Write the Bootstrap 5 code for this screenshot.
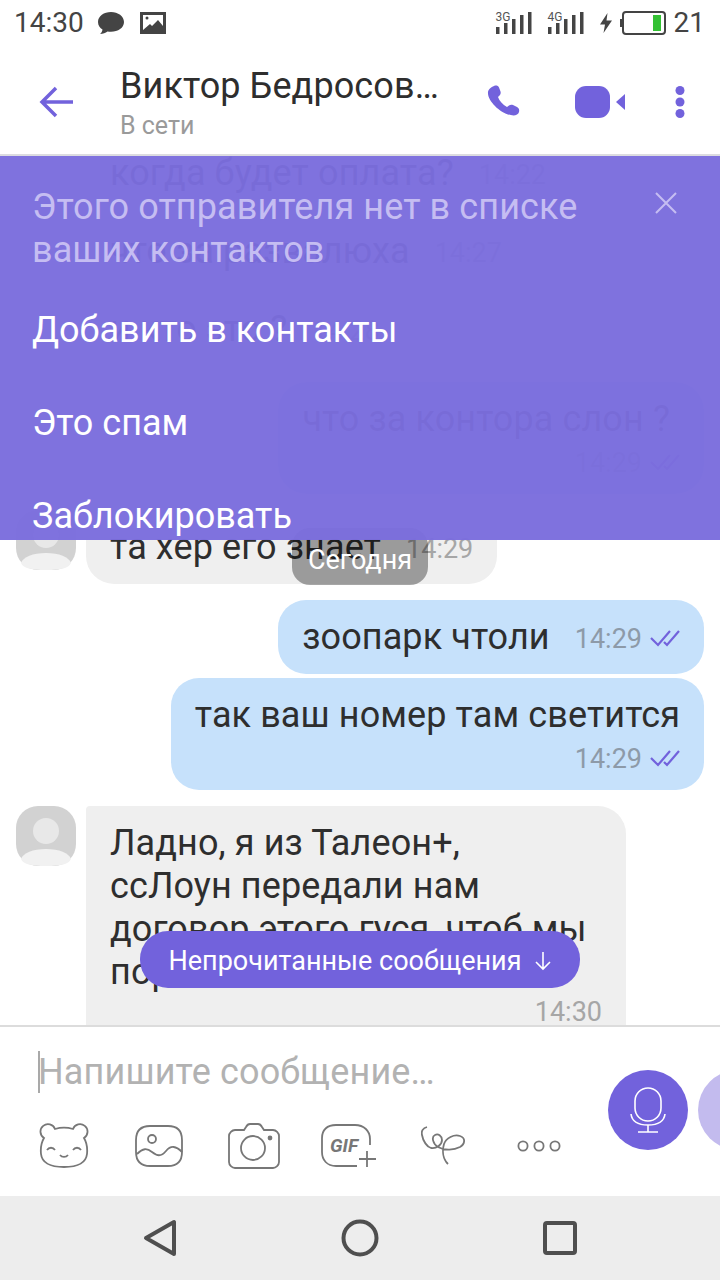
<!DOCTYPE html>
<html lang="ru">
<head>
    <meta charset="UTF-8">
    <meta name="viewport" content="width=device-width, initial-scale=1.0">
    <title>Чат</title>
    <link href="https://cdn.jsdelivr.net/npm/bootstrap@5.3.3/dist/css/bootstrap.min.css" rel="stylesheet">
    <style>
        html, body {
            width: 720px;
            height: 1280px;
            overflow: hidden;
            background: #fff;
        }
        body {
            font-family: Roboto, "Liberation Sans", sans-serif;
            color: #2e2e2e;
        }
        .phone {
            width: 720px;
            height: 1280px;
            overflow: hidden;
        }
        .status-bar {
            height: 50px;
            padding: 0 15px 5px 14px;
            color: #444;
            font-size: 28px;
        }
        .status-icon {
            margin-left: 14px;
        }
        .net-label {
            font-size: 12px;
            line-height: 10px;
            position: absolute;
            left: 0;
            top: 0;
            color: #555;
        }
        .signal {
            position: relative;
            width: 36px;
            height: 22px;
        }
        .toolbar {
            height: 106px;
            border-bottom: 2px solid #dcdce0;
        }
        .back-btn {
            width: 120px;
            padding-left: 39px;
        }
        .chat-title {
            width: 359px;
            padding-top: 3px;
        }
        .chat-name {
            font-size: 36px;
            line-height: 40px;
            letter-spacing: .1px;
            white-space: nowrap;
        }
        .chat-sub {
            font-size: 25px;
            line-height: 30px;
            margin-top: 5px;
            color: #9a9a9a;
        }
        .call-icon {
            margin-left: 8px;
        }
        .video-icon {
            margin-left: 54px;
        }
        .dots-icon {
            margin-left: 50px;
        }
        .chat-area {
            position: relative;
            height: 869px;
            overflow: hidden;
            padding: 0 16px;
        }
        .msg-list {
            margin-top: -20px;
        }
        .msg-row {
            display: flex;
            margin-bottom: 4px;
        }
        .msg-row.side-end {
            justify-content: flex-end;
        }
        .msg-row.gap-after {
            margin-bottom: 16px;
        }
        .avatar-box {
            width: 60px;
            height: 60px;
            flex: none;
            margin-right: 10px;
        }
        .avatar-blank {
            width: 60px;
            flex: none;
            margin-right: 10px;
        }
        .bubble {
            padding: 16px 24px 15px;
            font-size: 36px;
            line-height: 43px;
            letter-spacing: .1px;
            border-radius: 28px;
        }
        .bubble-in {
            background: #efefef;
            border-top-left-radius: 4px;
        }
        .bubble-wide {
            width: 540px;
            flex: none;
            padding-bottom: 48px;
        }
        .bubble-wide .msg-time {
            margin-top: 0;
        }
        .bubble-out {
            background: #c6e1fb;
        }
        .bubble-two {
            padding-bottom: 13px;
        }
        .time-row {
            margin-top: 2px;
        }
        .slon-text {
            margin-right: 10px;
        }
        .msg-time {
            font-size: 27px;
            line-height: 36px;
            letter-spacing: 0;
            color: #8d9aa8;
            margin-left: 25px;
            margin-top: 2px;
            white-space: nowrap;
        }
        .bubble-in .msg-time {
            color: #a6a6a6;
        }
        .notice-panel {
            position: absolute;
            left: 0;
            top: 0;
            right: 0;
            height: 384px;
            background: rgba(123, 109, 221, .97);
            padding: 30px 32px 0;
            overflow: hidden;
            z-index: 3;
        }
        .notice-text {
            font-size: 36px;
            line-height: 43px;
            letter-spacing: .1px;
            color: #c5bdf2;
        }
        .notice-spacer {
            height: 37px;
        }
        .notice-action {
            display: block;
            font-size: 36px;
            line-height: 43px;
            color: #fff;
            margin-bottom: 50px;
        }
        .notice-close {
            position: absolute;
            right: 43px;
            top: 36px;
        }
        .date-chip {
            position: absolute;
            left: 292px;
            top: 372px;
            width: 136px;
            height: 57px;
            padding-top: 17px;
            background: rgba(0, 0, 0, .35);
            border-radius: 18px;
            color: #fff;
            text-align: center;
            font-size: 27px;
            line-height: 30px;
            z-index: 2;
        }
        .unread-pill {
            position: absolute;
            left: 140px;
            top: 775px;
            width: 440px;
            height: 57px;
            padding-top: 3px;
            background: #7262dc;
            border-radius: 28px;
            color: #fff;
            font-size: 27px;
            z-index: 2;
        }
        .unread-arrow {
            margin-left: 12px;
        }
        .composer {
            height: 171px;
            border-top: 2px solid #dcdcdc;
            overflow: hidden;
        }
        .composer-main {
            width: 608px;
            flex: none;
            padding-left: 38px;
        }
        .composer-input {
            height: 42px;
            margin-top: 24px;
            border-left: 2px solid #a9a9a9;
            font-size: 36px;
            line-height: 42px;
            letter-spacing: .15px;
            color: #b2b2b2;
            text-indent: -2px;
            white-space: nowrap;
        }
        .tool-row {
            display: grid;
            grid-template-columns: 97px 93px 93px 100px 96px 44px;
            align-items: center;
            margin-top: 30px;
        }
        .circle-btn {
            width: 80px;
            height: 80px;
            flex: none;
            border-radius: 50%;
            margin-top: 43px;
        }
        .mic-btn {
            background: #7262dc;
        }
        .extra-btn {
            background: #c3bbee;
            margin-left: 10px;
        }
        .nav-bar {
            height: 84px;
            background: #ededed;
            padding: 0 143px 0 143px;
        }
    </style>
</head>
<body>
<div class="phone d-flex flex-column">

    <div class="status-bar d-flex align-items-center justify-content-between">
        <div class="d-flex align-items-center">
            <span>14:30</span>
            <svg class="status-icon" width="26" height="24" viewBox="0 0 26 24"><path d="M13 1C6 1 0 5 0 11c0 3.500 2 6 4.500 7.500-.3 2-1.300 3.500-2.500 4.500 3 0 5.500-1 7.500-2.500 1 .2 2.500.3 3.500.3 7 0 13-4 13-9.800S20 1 13 1z" fill="#444"/></svg>
            <svg class="ms-3" width="26" height="22" viewBox="0 0 26 22"><path d="M0 0h26v22H0z" fill="#444"/><path d="M3 3h20v11l-5-6-6 6-2-2-7 6z" fill="#fff"/><circle cx="7" cy="6" r="1.500" fill="#444"/></svg>
        </div>
        <div class="d-flex align-items-center">
            <div class="signal">
                <span class="net-label">3G</span>
                <svg class="position-absolute top-0 start-0" width="36" height="22" viewBox="0 0 36 22"><path d="M0 15h3.500v7H0zM8 11h3.500v11H8zM16 7h3.500v15H16zM24 3h3.500v19H24zM32 0h3.500v22H32z" fill="#444"/></svg>
            </div>
            <div class="signal ms-3">
                <span class="net-label">4G</span>
                <svg class="position-absolute top-0 start-0" width="36" height="22" viewBox="0 0 36 22"><path d="M0 15h3.500v7H0zM8 11h3.500v11H8zM16 7h3.500v15H16zM24 3h3.500v19H24zM32 0h3.500v22H32z" fill="#444"/></svg>
            </div>
            <svg class="ms-3" width="12" height="20" viewBox="0 0 12 20"><path d="M7.500 0L0 11.500h5L3.500 20 12 7.500H6.500z" fill="#444"/></svg>
            <svg class="ms-2" width="46" height="24" viewBox="0 0 46 24"><rect x="0" y="8" width="3" height="8" fill="#444"/><rect x="3" y="1" width="42" height="22" rx="3" fill="#fff" stroke="#444" stroke-width="2"/><rect x="33" y="4" width="8" height="16" fill="#33c133"/></svg>
            <span class="ms-2">21</span>
        </div>
    </div>

    <div class="toolbar d-flex align-items-center">
        <div class="back-btn">
            <svg width="34" height="32" viewBox="0 0 34 32"><path d="M34 16H3M17 2L3 16l14 14" fill="none" stroke="#7262dc" stroke-width="3.500"/></svg>
        </div>
        <div class="chat-title">
            <div class="chat-name">Виктор Бедросов…</div>
            <div class="chat-sub">В сети</div>
        </div>
        <svg class="call-icon" width="34" height="34" viewBox="0 0 34 34"><path d="M7 1c2-1 4-.500 5 1.500l1.500 4c.5 1.500 0 3-1 4l-1.500 1.500c1.500 4 4.500 7.500 9 10l2-1.500c1-.8 2.500-1 4-.5l4 2c2 1 2.500 3 2 5-.5 2-3 3.500-5.500 3.500C15 30 0 16 1 7c.3-2.500 3-5 6-6z" fill="#7262dc"/></svg>
        <svg class="video-icon" width="50" height="32" viewBox="0 0 50 32"><rect x="0" y="0" width="35" height="32" rx="11" fill="#7262dc"/><path d="M50 8v16l-9-8z" fill="#7262dc"/></svg>
        <svg class="dots-icon" width="10" height="32" viewBox="0 0 10 32"><circle cx="5" cy="4.500" r="4.500" fill="#7262dc"/><circle cx="5" cy="16" r="4.500" fill="#7262dc"/><circle cx="5" cy="27.500" r="4.500" fill="#7262dc"/></svg>
    </div>

    <div class="chat-area">
        <div class="msg-list">
            <div class="msg-row">
                <div class="avatar-blank"></div>
                <div class="bubble bubble-in d-flex align-items-center"><span>когда будет оплата?</span><span class="msg-time">14:22</span></div>
            </div>
            <div class="msg-row">
                <div class="avatar-blank"></div>
                <div class="bubble bubble-in d-flex align-items-center"><span>что за развалюха</span><span class="msg-time">14:27</span></div>
            </div>
            <div class="msg-row gap-after">
                <div class="avatar-blank"></div>
                <div class="bubble bubble-in d-flex align-items-center"><span>и кто это ?</span><span class="msg-time">14:28</span></div>
            </div>
            <div class="msg-row side-end gap-after">
                <div class="bubble bubble-out bubble-two">
                    <div class="slon-text">что за контора слон ?</div>
                    <div class="d-flex justify-content-end align-items-center time-row">
                        <span class="msg-time">14:29</span>
                        <svg class="ms-2" width="30" height="18" viewBox="0 0 30 18"><path d="M1 9l7 7L20 2M14 13l3 3L29 2" fill="none" stroke="#7262dc" stroke-width="2.200"/></svg>
                    </div>
                </div>
            </div>
            <div class="msg-row gap-after">
                <svg class="avatar-box" viewBox="0 0 60 60"><rect width="60" height="60" rx="22" fill="#d2d2d2"/><circle cx="30" cy="25" r="13" fill="#e8e8e8"/><path d="M5 53c2-6 12-10 25-10s23 4 25 10c-2 5-10 7-25 7S7 58 5 53z" fill="#f1f1f1"/></svg>
                <div class="bubble bubble-in d-flex align-items-center"><span>та хер его знает</span><span class="msg-time">14:29</span></div>
            </div>
            <div class="msg-row side-end">
                <div class="bubble bubble-out d-flex align-items-center">
                    <span>зоопарк чтоли</span>
                    <span class="msg-time">14:29</span>
                    <svg class="ms-2" width="30" height="18" viewBox="0 0 30 18"><path d="M1 9l7 7L20 2M14 13l3 3L29 2" fill="none" stroke="#7262dc" stroke-width="2.200"/></svg>
                </div>
            </div>
            <div class="msg-row side-end gap-after">
                <div class="bubble bubble-out bubble-two">
                    <div>так ваш номер там светится</div>
                    <div class="d-flex justify-content-end align-items-center time-row">
                        <span class="msg-time">14:29</span>
                        <svg class="ms-2" width="30" height="18" viewBox="0 0 30 18"><path d="M1 9l7 7L20 2M14 13l3 3L29 2" fill="none" stroke="#7262dc" stroke-width="2.200"/></svg>
                    </div>
                </div>
            </div>
            <div class="msg-row">
                <svg class="avatar-box" viewBox="0 0 60 60"><rect width="60" height="60" rx="22" fill="#d2d2d2"/><circle cx="30" cy="25" r="13" fill="#e8e8e8"/><path d="M5 53c2-6 12-10 25-10s23 4 25 10c-2 5-10 7-25 7S7 58 5 53z" fill="#f1f1f1"/></svg>
                <div class="bubble bubble-in bubble-wide">
                    <div>Ладно, я из Талеон+,<br>ссЛоун передали нам<br>договор этого гуся, чтоб мы<br>поработали</div>
                    <div class="d-flex justify-content-end"><span class="msg-time">14:30</span></div>
                </div>
            </div>
        </div>

        <div class="notice-panel">
            <div class="notice-text">Этого отправителя нет в списке<br>ваших контактов</div>
            <svg class="notice-close" width="22" height="22" viewBox="0 0 22 22"><path d="M1 1l20 20M21 1L1 21" stroke="#c5bdf2" stroke-width="2"/></svg>
            <div class="notice-spacer"></div>
            <a class="notice-action text-decoration-none" href="#">Добавить в контакты</a>
            <a class="notice-action text-decoration-none" href="#">Это спам</a>
            <a class="notice-action text-decoration-none" href="#">Заблокировать</a>
        </div>
        <div class="date-chip">Сегодня</div>
        <div class="unread-pill d-flex align-items-center justify-content-center">
            <span>Непрочитанные сообщения</span>
            <svg class="unread-arrow" width="18" height="20" viewBox="0 0 18 20"><path d="M9 1v17M2 11l7 7 7-7" fill="none" stroke="#fff" stroke-width="1.600"/></svg>
        </div>
    </div>

    <div class="composer d-flex">
        <div class="composer-main">
            <div class="composer-input">Напишите сообщение…</div>
            <div class="tool-row">
                <svg width="52" height="46" viewBox="0 0 52 46" fill="none" stroke="#777" stroke-width="1.800"><path d="M6 15A7.500 7.500 0 1 1 17 6C22 4.500 30 4.500 35 6A7.500 7.500 0 1 1 46 15C49 20 49.500 26 49 31C48 40 40 44 26 44S4 40 3 31C2.500 26 3 20 6 15z"/><path d="M9 27c2-3 6-3 8 0M35 27c2-3 6-3 8 0M22 32c2 2.500 6 2.500 8 0"/></svg>
                <svg width="48" height="44" viewBox="0 0 48 44" fill="none" stroke="#777" stroke-width="1.800"><path d="M15 2h18c9 0 14 5 14 14v12c0 9-5 14-14 14H15C6 42 1 37 1 28V16C1 7 6 2 15 2z"/><circle cx="17" cy="15" r="4"/><path d="M2 30c6-6 10-6 15-2s9 5 14-1 10-5 16 1"/></svg>
                <svg width="52" height="46" viewBox="0 0 52 46" fill="none" stroke="#777" stroke-width="1.800"><path d="M7 7h9l2-3c1-2 2-3 4-3h8c2 0 3 1 4 3l2 3h9c3 0 6 3 6 6v26c0 3-3 6-6 6H7c-3 0-6-3-6-6V13c0-3 3-6 6-6z"/><circle cx="25" cy="25" r="12"/><circle cx="42" cy="15" r="1.500" fill="#777"/></svg>
                <svg width="56" height="46" viewBox="0 0 56 46" fill="none" stroke="#777" stroke-width="1.800"><path d="M36 43H15C6 43 1 37 1 29V15C1 7 6 2 15 2h19c9 0 15 6 15 14v6"/><path d="M46 28v16M38 36h17"/><text x="9" y="29" font-family="Roboto, sans-serif" font-size="19" font-weight="700" font-style="italic" fill="#777" stroke="none">GIF</text></svg>
                <svg width="46" height="40" viewBox="0 0 46 40" fill="none" stroke="#777" stroke-width="1.800"><path d="M6 1C2 2 0 5 1 9C2 15 6 21 10 22C15 23 21 19 21 14C21 10 17 7 14 9C10 11 12 18 17 21C24 25 33 24 39 21C44 18 45 12 39 10C33 8 25 12 23 18C21 25 22 33 27 38"/></svg>
                <svg width="44" height="12" viewBox="0 0 44 12" fill="none" stroke="#777" stroke-width="1.800"><circle cx="6" cy="6" r="4.600"/><circle cx="22" cy="6" r="4.600"/><circle cx="38" cy="6" r="4.600"/></svg>
            </div>
        </div>
        <div class="circle-btn mic-btn d-flex align-items-center justify-content-center">
            <svg width="36" height="46" viewBox="0 0 36 46" fill="none" stroke="#fff" stroke-width="1.600"><rect x="5" y="1" width="26" height="33" rx="13"/><path d="M1 27c1 8 8 11 17 11s16-3 17-11M18 38v7M8 45h20"/></svg>
        </div>
        <div class="circle-btn extra-btn"></div>
    </div>

    <div class="nav-bar d-flex align-items-center justify-content-between">
        <svg width="34" height="38" viewBox="0 0 34 38"><path d="M31 3v32L3 19z" fill="none" stroke="#4f4f4f" stroke-width="4" stroke-linejoin="round"/></svg>
        <svg width="38" height="38" viewBox="0 0 38 38"><circle cx="19" cy="19" r="16.500" fill="none" stroke="#4f4f4f" stroke-width="4"/></svg>
        <svg width="34" height="34" viewBox="0 0 34 34"><rect x="2" y="2" width="30" height="30" rx="2" fill="none" stroke="#4f4f4f" stroke-width="4"/></svg>
    </div>
</div>
<script src="https://cdn.jsdelivr.net/npm/bootstrap@5.3.3/dist/js/bootstrap.bundle.min.js"></script>
</body>
</html>
